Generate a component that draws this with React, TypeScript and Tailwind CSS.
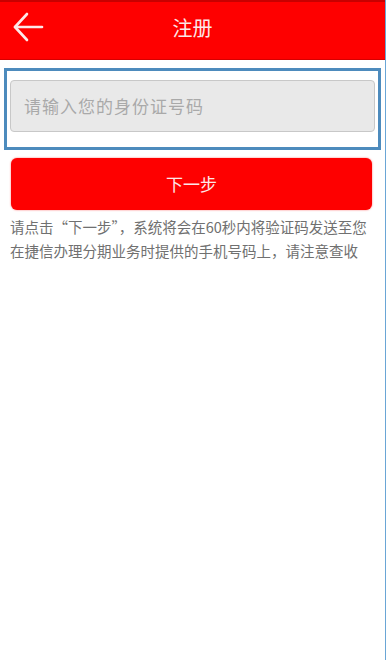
const FONT = "font-['Noto_Sans_CJK_SC','Noto_Sans',sans-serif]";

export default function App() {
	return (
		<div className={`h-[660px] w-[387px] bg-white ${FONT}`}>
			<div className="flex h-full w-[386px] flex-col border-r border-[#6aa6d6]">
				{/* Header */}
				<div className="relative flex h-[60px] items-center justify-center border-t-2 border-b border-t-[#c80000] border-b-[#d40000] bg-[#fe0000] pb-[6px]">
					<svg
						className="absolute left-[12px] top-[10px]"
						width="32"
						height="32"
						viewBox="0 0 32 32"
						fill="none"
						stroke="#fde8e8"
						strokeWidth="2.6"
						strokeLinecap="round"
						strokeLinejoin="round"
					>
						<path d="M3 15h27" />
						<path d="M15 2L3 15l12 13" />
					</svg>
					<span className="text-[20px] text-[#fde8e8]">注册</span>
				</div>

				{/* ID input */}
				<div className="mx-[4px] mt-[8px] border-[3px] border-[#4d8bbd] px-[3px] pt-[9px] pb-[15px]">
					<div className="flex h-[52px] items-center rounded-[4px] border border-[#c8c8c8] bg-[#e9e9e9] px-[13px]">
						<span className="text-[17px] tracking-[1px] text-[#a9a9a9]">请输入您的身份证号码</span>
					</div>
				</div>

				{/* Next */}
				<div className="ml-[11px] mr-[13px] mt-[8px] flex h-[52px] items-center justify-center rounded-[6px] bg-[#fe0000] shadow-[0_0_2px_rgba(255,0,0,0.6)]">
					<span className="text-[17px] text-[#fde8e8]">下一步</span>
				</div>

				<p className="mt-[5px] whitespace-nowrap px-[10px] text-[14.5px] leading-[24px] text-[#707070]">
					请点击“下一步”，系统将会在60秒内将验证码发送至您
					<br />
					在捷信办理分期业务时提供的手机号码上，请注意查收
				</p>
			</div>
		</div>
	);
}
